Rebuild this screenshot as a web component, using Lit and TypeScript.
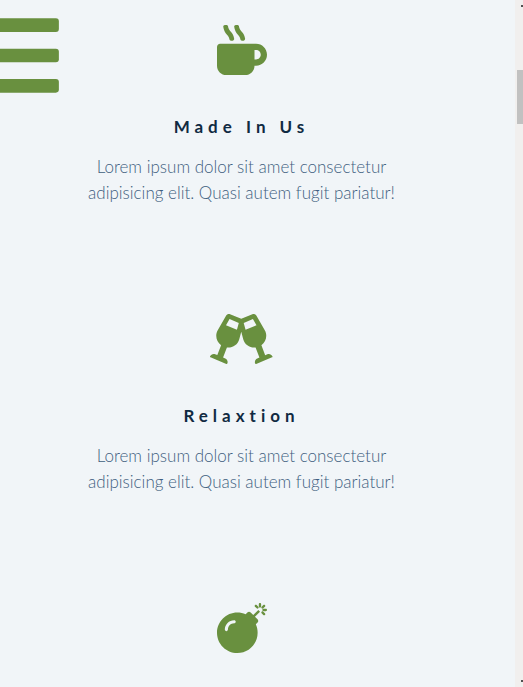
import { LitElement, html, css, svg, nothing } from "lit";
import { customElement, property } from "lit/decorators.js";

interface Service {
  icon: string;
  wide: boolean;
  title: string;
  text: string;
}

const MUG =
  "M127.1 146.5c1.3 7.7 8 13.5 16 13.5h16.5c9.8 0 17.6-8.5 16.3-18-3.8-28.2-16.4-54.2-36.6-74.7-14.4-14.7-23.6-33.3-26.4-53.5C111.8 5.9 105 0 96.8 0H80.4C70.6 0 63 8.5 64.1 18c3.9 31.9 18 61.3 40.6 84.4 12 12.2 19.7 27.5 22.4 44.1zm112 0c1.3 7.7 8 13.5 16 13.5h16.5c9.8 0 17.6-8.5 16.3-18-3.8-28.2-16.4-54.2-36.6-74.7-14.4-14.7-23.6-33.3-26.4-53.5C223.8 5.9 217 0 208.8 0h-16.4c-9.8 0-17.5 8.5-16.3 18 3.9 31.9 18 61.3 40.6 84.4 12 12.2 19.7 27.5 22.4 44.1zM400 192H32c-17.7 0-32 14.3-32 32v192c0 53 43 96 96 96h192c53 0 96-43 96-96h16c61.8 0 112-50.2 112-112s-50.2-112-112-112zm0 160h-16v-96h16c26.5 0 48 21.5 48 48s-21.5 48-48 48z";
const GLASSES =
  "M639.4 433.6c-8.4-20.4-31.8-30.1-52.2-21.6l-22.1 9.2-38.7-101.9c47.9-35 64.8-100.3 34.5-152.8L474.3 16c-8-13.9-25.1-19.7-40-13.6L320 49.8 205.7 2.4c-14.9-6.1-32-.3-40 13.6L79.1 166.5C48.9 219 65.7 284.3 113.6 319.2L74.9 421.1l-22.1-9.2c-20.4-8.5-43.7 1.2-52.2 21.6-1.7 4.1.2 8.8 4.3 10.5l162.3 67.4c4.1 1.7 8.7-.2 10.4-4.3 8.4-20.4-1.2-43.8-21.6-52.3l-22.1-9.2L173.3 342c4.4.5 8.8 1.3 13.1 1.3 51.7 0 99.4-33.1 113.4-85.3l20.2-75.4 20.2 75.4c14 52.2 61.7 85.3 113.4 85.3 4.3 0 8.7-.8 13.1-1.3L506 445.6l-22.1 9.2c-20.4 8.5-30 31.9-21.6 52.3 1.7 4.1 6.4 6 10.4 4.3L635.1 444c4-1.7 6-6.3 4.3-10.4zM275.9 162.1l-112.1-46.5 36.5-63.4 94.5 39.2-18.9 70.7zm88.2 0l-18.9-70.7 94.5-39.2 36.5 63.4-112.1 46.5z";
const BOMB =
  "M440.5 88.5l-52 52L415 167c9.4 9.4 9.4 24.6 0 33.9l-17.4 17.4c11.8 26.1 18.4 55.1 18.4 85.6 0 114.9-93.1 208-208 208S0 418.9 0 304 93.1 96 208 96c30.5 0 59.5 6.6 85.6 18.4L311 97c9.4-9.4 24.6-9.4 33.9 0l26.5 26.5 52-52 17.1 17zM500 60h-24c-6.6 0-12 5.4-12 12s5.4 12 12 12h24c6.6 0 12-5.4 12-12s-5.4-12-12-12zM440 0c-6.6 0-12 5.4-12 12v24c0 6.6 5.4 12 12 12s12-5.4 12-12V12c0-6.6-5.4-12-12-12zm33.9 55l17-17c4.7-4.7 4.7-12.3 0-17-4.7-4.7-12.3-4.7-17 0l-17 17c-4.7 4.7-4.7 12.3 0 17 4.8 4.7 12.4 4.7 17 0zm-67.8 0c4.7 4.7 12.3 4.7 17 0 4.7-4.7 4.7-12.3 0-17l-17-17c-4.7-4.7-12.3-4.7-17 0-4.7 4.7-4.7 12.3 0 17l17 17zm67.8 34c-4.7-4.7-12.3-4.7-17 0-4.7 4.7-4.7 12.3 0 17l17 17c4.7 4.7 12.3 4.7 17 0 4.7-4.7 4.7-12.3 0-17l-17-17zM112 272c0-35.3 28.7-64 64-64 8.8 0 16-7.2 16-16s-7.2-16-16-16c-52.9 0-96 43.1-96 96 0 8.8 7.2 16 16 16s16-7.2 16-16z";

const LOREM =
  "Lorem ipsum dolor sit amet consectetur adipisicing elit. Quasi autem fugit pariatur!";

const SERVICES: Service[] = [
  { icon: MUG, wide: false, title: "Made In Us", text: LOREM },
  { icon: GLASSES, wide: true, title: "Relaxtion", text: LOREM },
  { icon: BOMB, wide: false, title: "", text: "" },
];

@customElement("service-card")
export class ServiceCard extends LitElement {
  @property({ attribute: false }) service!: Service;

  static styles = css`
    :host {
      display: block;
      text-align: center;
    }
    .icon {
      display: block;
      height: 50px;
      margin: 0 auto 40px;
      fill: #69903f;
    }
    .title {
      margin: 0 0 15px;
      color: #102a42;
      font-size: 17px;
      font-weight: 700;
      line-height: 24px;
      letter-spacing: 5px;
    }
    .text {
      max-width: 320px;
      margin: 0 auto;
      color: #3f5f80;
      font-size: 17px;
      font-weight: 300;
      line-height: 26px;
    }
  `;

  render() {
    const s = this.service;
    return html`
      <svg class="icon" viewBox="0 0 ${s.wide ? 640 : 512} 512" aria-hidden="true">
        ${svg`<path d=${s.icon}></path>`}
      </svg>
      ${s.title ? html`<h2 class="title">${s.title}</h2>` : nothing}
      ${s.text ? html`<p class="text">${s.text}</p>` : nothing}
    `;
  }
}

@customElement("app-root")
export class AppRoot extends LitElement {
  static styles = css`
    :host {
      display: grid;
      grid-template-columns: minmax(0, 1fr) 8px;
      height: 100vh;
      overflow: hidden;
      background: #f1f5f8;
      font-family: Lato, "Open Sans", sans-serif;
    }
    .menu {
      position: fixed;
      top: 7px;
      left: -26px;
      padding: 0;
      border: 0;
      background: none;
      cursor: pointer;
    }
    .bars {
      display: block;
      height: 97px;
      fill: #69903f;
    }
    .services {
      display: flex;
      flex-direction: column;
      gap: 108px;
      padding: 25px 32px 32px 0;
      overflow-y: auto;
      scrollbar-width: none;
    }
    .track {
      display: flex;
      flex-direction: column;
      align-items: flex-end;
      padding: 5px 0;
      background: #f1efee;
    }
    .thumb {
      width: 6px;
      height: 54px;
      margin: 63px 0 auto;
      background: #c1c1c1;
    }
    .arrow {
      width: 2px;
      height: 2px;
      background: #505050;
    }
  `;

  render() {
    return html`
      <main class="services">
        ${SERVICES.map((s) => html`<service-card .service=${s}></service-card>`)}
      </main>
      <div class="track" aria-hidden="true">
        <span class="arrow"></span>
        <span class="thumb"></span>
        <span class="arrow"></span>
      </div>
      <button class="menu" type="button" aria-label="Open menu">
        <svg class="bars" viewBox="0 0 448 512" aria-hidden="true">
          <rect y="60" width="448" height="72" rx="16"></rect>
          <rect y="220" width="448" height="72" rx="16"></rect>
          <rect y="380" width="448" height="72" rx="16"></rect>
        </svg>
      </button>
    `;
  }
}
